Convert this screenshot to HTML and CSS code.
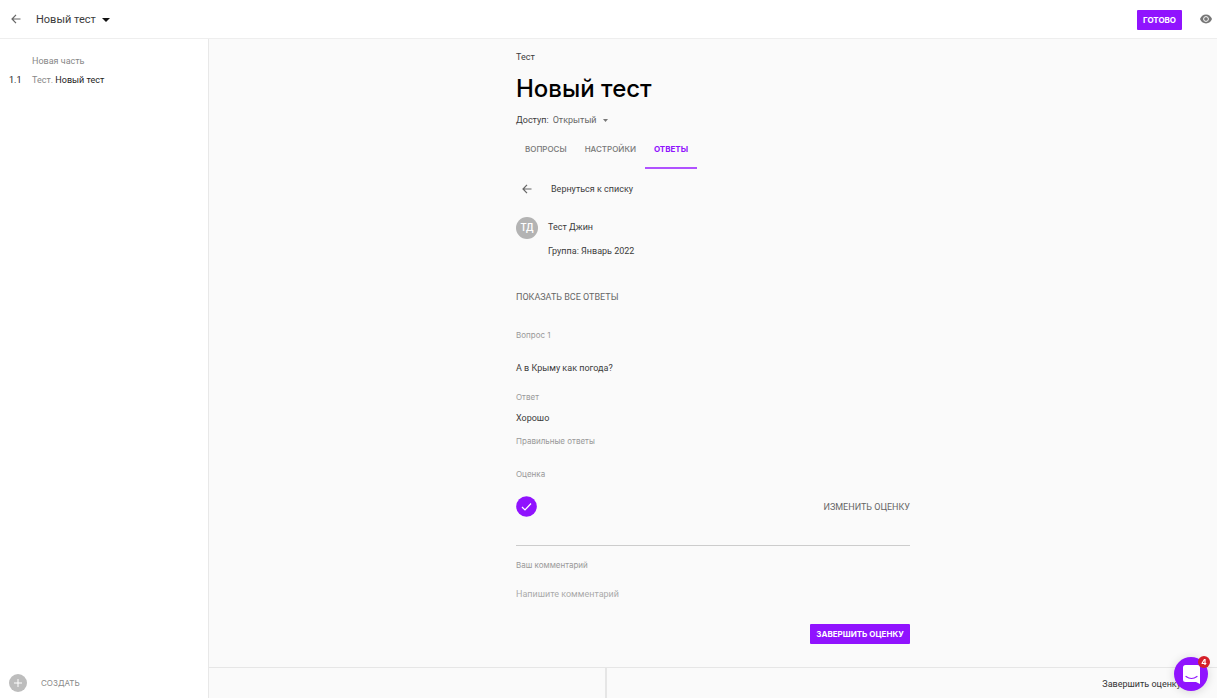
FILE: index.html
```html
<!DOCTYPE html>
<html lang="ru">
<head>
<meta charset="utf-8">
<meta name="viewport" content="width=device-width, initial-scale=1">
<title>Новый тест</title>
<link rel="stylesheet" href="styles.css">
</head>
<body>
<header class="topbar">
  <button class="icon-btn" type="button" aria-label="Назад"><svg width="10" height="10" viewBox="0 0 10 10" fill="none" stroke="#666" stroke-width="1.2"><path d="M9.5 5H1M5 .8 1 5l4 4.2"/></svg></button>
  <button class="doc-name" type="button">Новый тест<svg width="8" height="4" viewBox="0 0 8 4"><path d="M0 0h8L4 4z" fill="#111"/></svg></button>
  <button class="primary ready" type="button">ГОТОВО</button>
  <button class="icon-btn" type="button" aria-label="Просмотр"><svg width="12" height="10" viewBox="0 0 12 10"><path d="M6 .6C3.200.6.9 2.500 0 5c.9 2.500 3.200 4.400 6 4.400S11.100 7.500 12 5C11.100 2.500 8.800.6 6 .6z" fill="#777"/><circle cx="6" cy="5" r="2.400" fill="#777" stroke="#fff"/></svg></button>
</header>
<div class="workspace">
  <aside class="sidebar">
    <nav class="outline">
      <a class="part" href="#">Новая часть</a>
      <span class="number">1.1</span>
      <a class="lesson" href="#">Тест. <span class="lesson-name">Новый тест</span></a>
    </nav>
    <button class="create" type="button"><svg width="18" height="18" viewBox="0 0 18 18"><circle cx="9" cy="9" r="9" fill="#bdbdbd"/><path d="M9 5v8M5 9h8" stroke="#fff"/></svg>СОЗДАТЬ</button>
  </aside>
  <div class="content">
    <main class="page">
      <p class="kind">Тест</p>
      <h1 class="title">Новый тест</h1>
      <div class="access">
        <label for="access">Доступ:</label>
        <select id="access" class="access-select"><option>Открытый</option></select>
        <svg class="access-caret" width="5" height="3" viewBox="0 0 5 3"><path d="M0 0h5L2.500 3z" fill="#777"/></svg>
      </div>
      <div class="tabs" role="tablist">
        <button class="tab" type="button" role="tab">ВОПРОСЫ</button>
        <button class="tab" type="button" role="tab">НАСТРОЙКИ</button>
        <button class="tab tab-active" type="button" role="tab" aria-selected="true">ОТВЕТЫ</button>
      </div>
      <a class="back" href="#"><svg width="10" height="10" viewBox="0 0 10 10" fill="none" stroke="#666" stroke-width="1.2"><path d="M9.500 5H1M5 .8 1 5l4 4.200"/></svg>Вернуться к списку</a>
      <section class="student">
        <span class="avatar">ТД</span>
        <div class="student-info">
          <p>Тест Джин</p>
          <p>Группа: Январь 2022</p>
        </div>
      </section>
      <button class="text-btn show-all" type="button">ПОКАЗАТЬ ВСЕ ОТВЕТЫ</button>
      <section class="question">
        <h2 class="caption">Вопрос 1</h2>
        <p class="question-text">А в Крыму как погода?</p>
        <h3 class="caption answer-caption">Ответ</h3>
        <p class="answer">Хорошо</p>
        <h3 class="caption correct-caption">Правильные ответы</h3>
        <h3 class="caption grade-caption">Оценка</h3>
        <div class="grade">
          <svg width="21" height="21" viewBox="0 0 21 21" role="img" aria-label="Верно"><circle cx="10.500" cy="10.500" r="10.300" fill="#9013fe"/><path d="m6 11 3 3 6-6.500" fill="none" stroke="#fff" stroke-width="1.200"/></svg>
          <button class="text-btn" type="button">ИЗМЕНИТЬ ОЦЕНКУ</button>
        </div>
        <label class="caption comment-label" for="comment">Ваш комментарий</label>
        <input id="comment" class="comment" type="text" placeholder="Напишите комментарий">
        <button class="primary finish" type="button">ЗАВЕРШИТЬ ОЦЕНКУ</button>
      </section>
    </main>
    <footer class="bottombar">
      <div class="previous"></div>
      <a class="next" href="#">Завершить оценку</a>
    </footer>
  </div>
</div>
<button class="chat" type="button" aria-label="Сообщения">
  <svg width="17" height="19" viewBox="0 0 17 19"><path d="M2.500 0h12Q17 0 17 2.500V19l-4-2H2.500Q0 17 0 14.500v-12Q0 0 2.500 0z" fill="#fff"/><path d="M3 11.500q5.500 4 11 0" fill="none" stroke="#9013fe" stroke-width="1.200" stroke-linecap="round"/></svg>
  <span class="chat-count">4</span>
</button>
</body>
</html>
```
FILE: styles.css
```css
* { box-sizing: border-box; }
body {
  margin: 0;
  min-height: 100vh;
  display: flex;
  flex-direction: column;
  background: #fff;
  color: #3c3c3c;
  font: 9px/16px Roboto, "Liberation Sans", sans-serif;
}
p, h1, h2, h3 { margin: 0; font-weight: 400; }
button, input, select {
  margin: 0;
  padding: 0;
  border: 0;
  background: none;
  color: inherit;
  font: inherit;
}
button { cursor: pointer; }
a { color: inherit; text-decoration: none; }
svg { display: block; flex: none; }

.topbar {
  display: flex;
  align-items: center;
  height: 39px;
  padding: 0 5px 0 11px;
  border-bottom: 1px solid #eee;
}
.doc-name {
  display: flex;
  align-items: center;
  gap: 6px;
  margin: 2px auto 0 15px;
  font-size: 11px;
}
.primary {
  height: 20px;
  border-radius: 1px;
  background: #9013fe;
  color: #fff;
  font: 700 8px/20px Inter, sans-serif;
}
.ready { width: 45px; margin: 2px 18px 0 0; }

.workspace { flex: 1; display: flex; }
.sidebar {
  flex: none;
  width: 209px;
  display: flex;
  flex-direction: column;
  justify-content: space-between;
  padding: 14px 10px 6px 9px;
  border-right: 1px solid #e8e8e8;
}
.outline {
  display: grid;
  grid-template-columns: 23px 1fr;
  row-gap: 3px;
  color: #888;
}
.part { grid-column: 2; }
.number, .lesson-name { color: #222; }
.create {
  display: flex;
  align-items: center;
  gap: 14px;
  color: #888;
  font: 8px/18px Inter, sans-serif;
}

.content {
  flex: 1;
  display: flex;
  flex-direction: column;
  background: #fafafa;
}
.page {
  flex: 1;
  display: flex;
  flex-direction: column;
  align-items: flex-start;
  width: 100%;
  max-width: 394px;
  margin: 0 auto;
  padding: 10px 0 22px;
}
.title {
  margin-top: 8px;
  color: #000;
  font: 500 24px/32px Inter, sans-serif;
}
.access { display: flex; align-items: center; gap: 4px; margin-top: 7px; }
.access-select { appearance: none; height: 16px; color: #666; }
.access-caret { margin-left: 2px; }
.tabs { display: flex; margin-top: 1px; }
.tab {
  height: 40px;
  padding: 2px 9px 0;
  border-bottom: 2px solid transparent;
  color: #777;
  font: 500 8px/16px Inter, sans-serif;
}
.tab-active { border-color: #b052ff; color: #9013fe; font-weight: 700; }
.back {
  display: flex;
  align-items: center;
  gap: 19px;
  margin: 12px 0 0 6px;
}
.student { display: flex; gap: 10px; margin-top: 20px; }
.avatar {
  width: 22px;
  height: 22px;
  border-radius: 50%;
  background: #b3b3b3;
  color: #fff;
  font-size: 10px;
  font-weight: 500;
  line-height: 22px;
  text-align: center;
}
.student-info { display: grid; gap: 8px; padding-top: 2px; }
.text-btn { color: #666; line-height: 16px; }
.show-all { margin-top: 30px; }
.question {
  display: flex;
  flex-direction: column;
  width: 100%;
  margin-top: 22px;
}
.caption { color: #999; font: 8px/16px Inter, sans-serif; }
.question-text { margin-top: 17px; }
.answer-caption { margin-top: 13px; }
.answer { margin-top: 5px; }
.correct-caption { margin-top: 7px; }
.grade-caption { margin-top: 17px; }
.grade {
  display: flex;
  align-items: center;
  justify-content: space-between;
  margin-top: 14px;
  padding-bottom: 28px;
  border-bottom: 1px solid #ccc;
}
.comment-label { margin-top: 11px; }
.comment { height: 16px; margin-top: 13px; outline: 0; }
.comment::placeholder { color: #aaa; opacity: 1; }
.finish { align-self: flex-end; width: 100px; margin-top: 22px; }

.bottombar {
  display: flex;
  height: 31px;
  border-top: 1px solid #e6e6e6;
}
.previous { width: 39.500%; border-right: 2px solid #e6e6e6; }
.next {
  flex: 1;
  padding: 8px 36px 0 0;
  color: #333;
  text-align: right;
}
.chat {
  position: fixed;
  right: 9px;
  bottom: 7px;
  display: grid;
  place-items: center;
  width: 34px;
  height: 34px;
  border-radius: 50%;
  background: #9013fe;
  box-shadow: 0 1px 10px rgba(0, 0, 0, 0.15);
}
.chat-count {
  position: absolute;
  top: -1px;
  right: -2px;
  width: 12px;
  height: 12px;
  border-radius: 50%;
  background: #d5202a;
  color: #fff;
  font: 700 8px/12px Inter, sans-serif;
}
```
